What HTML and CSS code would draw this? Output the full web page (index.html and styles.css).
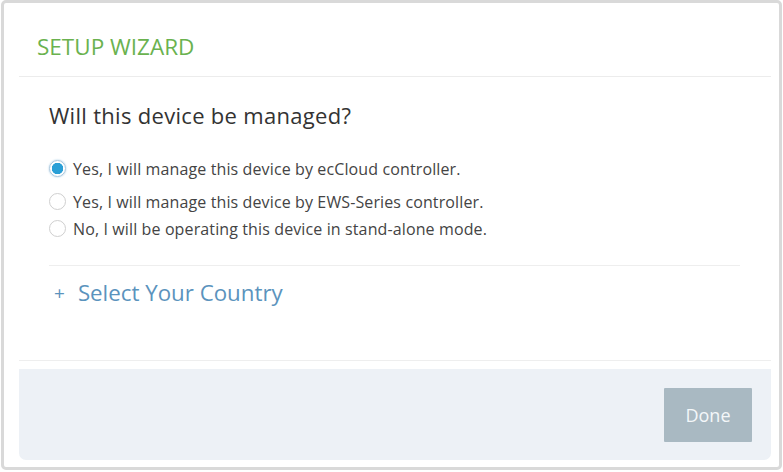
FILE: index.html
```html
<!DOCTYPE html>
<html>
<head>
<meta charset="utf-8">
<link rel="stylesheet" href="styles.css">
</head>
<body>
<div class="panel">
  <div class="header">
    <h1 class="title">SETUP WIZARD</h1>
  </div>
  <div class="content">
    <h2 class="question">Will this device be managed?</h2>
    <div class="options">
      <label class="option first"><span class="radio checked"></span><span>Yes, I will manage this device by ecCloud controller.</span></label>
      <label class="option"><span class="radio"></span><span>Yes, I will manage this device by EWS-Series controller.</span></label>
      <label class="option"><span class="radio"></span><span>No, I will be operating this device in stand-alone mode.</span></label>
    </div>
    <div class="country"><span class="plus">+</span><span>Select Your Country</span></div>
  </div>
  <div class="footer">
    <button class="done">Done</button>
  </div>
</div>
</body>
</html>
```
FILE: styles.css
```css
* { box-sizing: border-box; }
html, body { margin: 0; padding: 0; background: #ffffff; }
body { font-family: "Open Sans", "Noto Sans", sans-serif; width: 783px; height: 472px; overflow: hidden; }
.panel {
  margin-left: 1px;
  width: 781px;
  height: 470px;
  border: 3px solid #d9d9d9;
  border-radius: 5px;
  padding: 0 8px 0 15px;
  display: flex;
  flex-direction: column;
}
.header {
  height: 74px;
  border-bottom: 1px solid #ececec;
  padding: 30px 0 0 18px;
}
.title {
  margin: 0;
  font-weight: 400;
  font-size: 22.5px;
  line-height: 28px;
  color: #6ab24f;
}
.content {
  height: 284px;
  border-bottom: 1px solid #eeeeee;
  padding: 0 31px 0 30px;
}
.question {
  margin: 0;
  padding-top: 23px;
  font-weight: 400;
  font-size: 22px;
  letter-spacing: 0.3px;
  line-height: 30px;
  color: #333333;
}
.options { display: flex; flex-direction: column; padding-top: 25px; padding-bottom: 23px; border-bottom: 1px solid #eeeeee; }
.option {
  display: flex;
  align-items: center;
  gap: 7px;
  font-size: 16px;
  letter-spacing: 0.12px;
  line-height: 20px;
  color: #444444;
  height: 27px;
}
.option.first { margin-bottom: 6px; }
.radio {
  width: 17px;
  height: 17px;
  border-radius: 50%;
  border: 1px solid #cfcfcf;
  background: #fff;
  flex: none;
}
.radio.checked {
  border: 1px solid #a9c6dc;
  background: radial-gradient(circle, #2a9fd6 0, #2a9fd6 5.5px, #ffffff 6px);
  box-shadow: 0 0 2px #9cc4e0;
}
.country {
  display: flex;
  align-items: center;
  gap: 13px;
  padding: 12px 0 0 5px;
  font-size: 22.3px;
  line-height: 30px;
  color: #5b93bd;
}
.plus { font-size: 19px; }
.footer {
  margin-top: 8px;
  height: 91px;
  background: #edf1f6;
  border-radius: 0 0 7px 7px;
  display: flex;
  justify-content: flex-end;
  align-items: flex-start;
  padding: 19px 19px 0 0;
}
.done {
  width: 88px;
  height: 54px;
  border: none;
  background: #a9b9c2;
  color: #f4f7f9;
  font-family: inherit;
  font-size: 18px;
  border-radius: 1px;
}
```
